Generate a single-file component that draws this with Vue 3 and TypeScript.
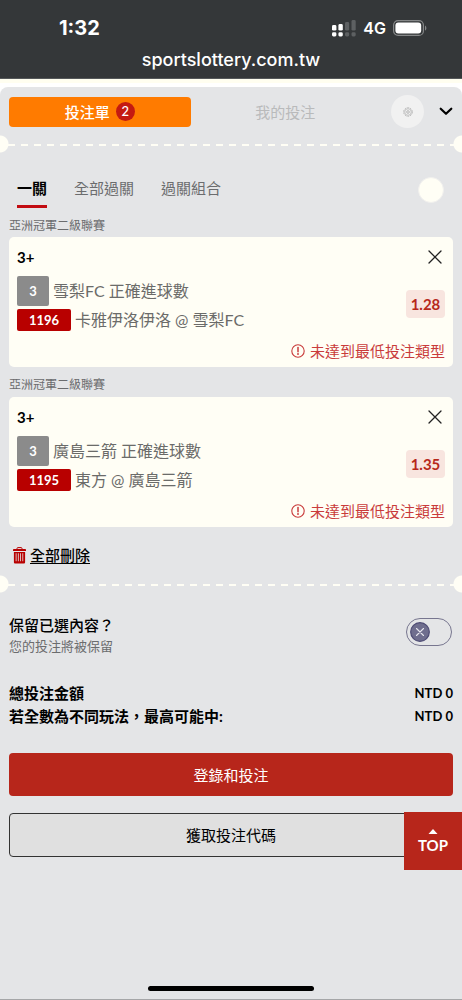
<script setup lang="ts">
import { ref } from 'vue'

interface Bet {
  id: string
  league: string
  pick: string
  minimum: string
  market: string
  match: string
  odds: string
}

const bets = ref<Bet[]>([
  { id: '1196', league: '亞洲冠軍二級聯賽', pick: '3+', minimum: '3', market: '雪梨FC 正確進球數', match: '卡雅伊洛伊洛 @ 雪梨FC', odds: '1.28' },
  { id: '1195', league: '亞洲冠軍二級聯賽', pick: '3+', minimum: '3', market: '廣島三箭 正確進球數', match: '東方 @ 廣島三箭', odds: '1.35' },
])

const modes = ['一關', '全部過關', '過關組合']
const activeMode = ref('一關')
const keepSelection = ref(false)

function removeBet(id: string): void {
  bets.value = bets.value.filter((bet) => bet.id !== id)
}
</script>

<template>
  <div class="screen">
    <header class="phone-bar">
      <div class="status">
        <span class="clock">1:32</span>
        <div class="indicators">
          <svg class="signal" width="24" height="17" viewBox="0 0 24 17" aria-hidden="true">
            <g fill="#fff">
              <rect x="0" y="5" width="4.4" height="5.600" rx="1.4" />
              <rect x="0" y="12.3" width="4.4" height="4.2" rx="1.4" />
              <rect x="6.4" y="4" width="4.4" height="6.600" rx="1.4" />
              <rect x="6.4" y="12.3" width="4.4" height="4.2" rx="1.4" />
            </g>
            <g fill="#5d6062">
              <rect x="13" y="2" width="4.2" height="8.600" rx="1.4" />
              <rect x="13" y="12.3" width="4.2" height="4.2" rx="1.4" />
              <rect x="19.5" y="0" width="4.2" height="10.600" rx="1.4" />
              <rect x="19.5" y="12.3" width="4.2" height="4.2" rx="1.4" />
            </g>
          </svg>
          <span class="network">4G</span>
          <svg class="battery" width="34" height="16" viewBox="0 0 34 16" aria-hidden="true">
            <rect x=".6" y=".6" width="29.8" height="14.8" rx="4.5" fill="none" stroke="#858788" stroke-width="1.2" />
            <rect x="2.4" y="2.4" width="25.8" height="11.2" rx="3" fill="#fff" />
            <path d="M32 5.4c1.8.7 1.8 4.5 0 5.2z" fill="#858788" />
          </svg>
        </div>
      </div>
      <div class="address">sportslottery.com.tw</div>
    </header>

    <main class="slip">
      <div class="top-row">
        <nav class="top-tabs">
          <button type="button" class="tab tab-on">投注單<span class="count">{{ bets.length }}</span></button>
          <button type="button" class="tab">我的投注</button>
        </nav>
        <button type="button" class="gear" aria-label="設定">
          <svg width="10" height="10" viewBox="0 0 10 10" fill="none" stroke="#b6b6b6">
            <circle cx="5" cy="5" r="4.3" stroke-width="1" stroke-dasharray="1.8 .9" />
            <circle cx="5" cy="5" r="3.3" stroke-width=".8" />
            <circle cx="5" cy="5" r="1.3" stroke-width="1" />
          </svg>
        </button>
        <button type="button" class="collapse" aria-label="收合">
          <svg width="14" height="9" viewBox="0 0 14 9" fill="none" stroke="#000" stroke-width="2.2" stroke-linecap="round" stroke-linejoin="round">
            <path d="M1.7 1.7 7 6.8l5.3-5.1" />
          </svg>
        </button>
      </div>

      <div class="tear"></div>

      <div class="modes">
        <button
          v-for="mode in modes"
          :key="mode"
          type="button"
          class="mode"
          :class="{ chosen: mode === activeMode }"
          @click="activeMode = mode"
        >{{ mode }}</button>
        <span class="dot"></span>
      </div>

      <section v-for="bet in bets" :key="bet.id" class="bet">
        <h2 class="league">{{ bet.league }}</h2>
        <article class="card">
          <div class="card-head">
            <span>{{ bet.pick }}</span>
            <button type="button" class="close" aria-label="移除" @click="removeBet(bet.id)">
              <svg width="14" height="14" viewBox="0 0 14 14" stroke="#222" stroke-width="1.3" stroke-linecap="round">
                <path d="M1 1l12 12M13 1 1 13" />
              </svg>
            </button>
          </div>
          <div class="card-body">
            <div class="lines">
              <div class="line"><span class="tag tag-min">{{ bet.minimum }}</span>{{ bet.market }}</div>
              <div class="line"><span class="tag tag-id">{{ bet.id }}</span>{{ bet.match }}</div>
            </div>
            <span class="odds">{{ bet.odds }}</span>
          </div>
          <p class="warning">
            <svg width="14" height="14" viewBox="0 0 14 14" aria-hidden="true">
              <circle cx="7" cy="7" r="6.2" fill="none" stroke="#c93b3b" stroke-width="1.1" />
              <path d="M7 3.5v4.2" stroke="#c93b3b" stroke-width="1.5" stroke-linecap="round" />
              <circle cx="7" cy="10" r=".95" fill="#c93b3b" />
            </svg>
            未達到最低投注類型
          </p>
        </article>
      </section>

      <button type="button" class="clear" @click="bets = []">
        <svg width="13" height="17" viewBox="0 0 13 17" aria-hidden="true">
          <path d="M4 2.2V1.5C4 .9 4.4.6 5 .6h3c.6 0 1 .3 1 .9v.7" fill="none" stroke="#b80000" stroke-width="1" />
          <path d="M.7 2h11.6c.4 0 .7.3.7.7V4H0V2.7C0 2.3.3 2 .7 2z" fill="#b80000" />
          <path fill-rule="evenodd" d="M.9 5h11.2v10.2c0 .8-.6 1.4-1.4 1.4H2.3c-.8 0-1.4-.6-1.4-1.4zM2.7 6.3v8h.8v-8zm2.200 0v8h.8v-8zm2.300 0v8h.8v-8zm2.200 0v8h.8v-8z" fill="#b80000" />
        </svg>
        <span>全部刪除</span>
      </button>

      <div class="tear"></div>

      <div class="keep">
        <label for="keep" class="keep-text">
          <strong>保留已選內容？</strong>
          <small>您的投注將被保留</small>
        </label>
        <span class="switch">
          <input id="keep" v-model="keepSelection" type="checkbox" />
          <svg class="knob" :class="{ on: keepSelection }" width="20" height="20" viewBox="0 0 20 20" aria-hidden="true">
            <circle cx="10" cy="10" r="9.3" fill="#6f6e8e" stroke="#4d4b74" stroke-width="1.2" />
            <path d="M6.5 6.5l7 7M13.5 6.5l-7 7" stroke="#e6e6ee" stroke-width="1.1" stroke-linecap="round" />
          </svg>
        </span>
      </div>

      <dl class="totals">
        <div><dt>總投注金額</dt><dd>NTD 0</dd></div>
        <div><dt>若全數為不同玩法，最高可能中:</dt><dd>NTD 0</dd></div>
      </dl>

      <div class="actions">
        <button type="button" class="action primary">登錄和投注</button>
        <div class="code-row">
          <button type="button" class="action outline">獲取投注代碼</button>
          <button type="button" class="to-top">
            <svg width="10" height="5" viewBox="0 0 10 5" aria-hidden="true"><path d="M5 0l4.5 5H.5z" fill="#fff" /></svg>
            TOP
          </button>
        </div>
      </div>

      <div class="home-indicator"></div>
    </main>
  </div>
</template>

<style>
body {
  margin: 0;
}
</style>

<style scoped>
* {
  box-sizing: border-box;
}
.screen {
  min-height: 100vh;
  display: flex;
  flex-direction: column;
  background: linear-gradient(#fffef0 83px, #fff 83px);
  color: #000;
  font-family: Lato, "Noto Sans CJK TC", sans-serif;
  font-size: 15px;
  line-height: 22px;
}
button {
  margin: 0;
  padding: 0;
  border: 0;
  background: none;
  color: inherit;
  font: inherit;
  cursor: pointer;
}
svg {
  display: block;
  flex: none;
}
.phone-bar {
  height: 79px;
  padding-top: 15px;
  background: #343739;
  border-bottom: 1px solid #55585a;
  color: #fff;
  font-family: Inter, sans-serif;
  font-weight: 600;
}
.status {
  display: flex;
  justify-content: space-between;
  align-items: center;
  height: 26px;
  padding: 0 35px 0 59px;
}
.clock {
  font-size: 20px;
  font-weight: 700;
}
.indicators {
  display: flex;
  align-items: center;
  gap: 7px;
}
.network {
  font-size: 16px;
}
.address {
  height: 38px;
  line-height: 38px;
  text-align: center;
  font-size: 18px;
  font-weight: 500;
}
.slip {
  flex: 1;
  display: flex;
  flex-direction: column;
  margin-top: 8px;
  border-radius: 8px 8px 0 0;
  border-bottom: 1px solid #a5a6a8;
  background: #e4e5e7;
}
.top-row {
  display: flex;
  align-items: center;
  gap: 15px;
  padding: 8px 9px 7px;
}
.top-tabs {
  flex: 1;
  display: grid;
  grid-template-columns: 1fr 1fr;
  gap: 4px;
}
.tab {
  height: 30px;
  display: flex;
  align-items: center;
  justify-content: center;
  gap: 6px;
  border-radius: 4px;
  color: #b9babb;
}
.tab-on {
  background: #ff7b00;
  color: #fff;
  font-weight: 500;
}
.count {
  width: 19px;
  height: 19px;
  border-radius: 50%;
  background: #c41a11;
  font-size: 13px;
  line-height: 19px;
}
.gear {
  width: 33px;
  height: 33px;
  display: grid;
  place-items: center;
  border-radius: 50%;
  background: #f1f1f1;
}
.tear {
  height: 18px;
  background:
    radial-gradient(circle at 0 9px, #fffef5 8px, transparent 9px),
    radial-gradient(circle at 100% 9px, #fffef5 8px, transparent 9px),
    repeating-linear-gradient(90deg, #fffef5 0 7px, transparent 7px 13px) 8px 9px / 100% 2px no-repeat;
}
.modes {
  display: flex;
  align-items: center;
  gap: 27px;
  height: 62px;
  padding: 11px 18px 0 17px;
  color: #6b6c6e;
}
.mode {
  height: 36px;
  border-bottom: 3px solid transparent;
}
.mode.chosen {
  border-color: #c20c12;
  color: #000;
  font-weight: 700;
}
.dot {
  width: 26px;
  height: 26px;
  margin-left: auto;
  border-radius: 50%;
  background: #fffef5;
  border: 1px solid #f1f0ee;
}
.bet {
  padding: 0 9px;
}
.league {
  margin: 0;
  padding-top: 7px;
  height: 30px;
  color: #6b6c6e;
  font-size: 12px;
  font-weight: 400;
  line-height: 22px;
}
.modes + .bet .league {
  height: 22px;
  padding-top: 0;
}
.card {
  height: 130px;
  padding: 9px 8px 5px;
  border-radius: 5px;
  background: #fffef5;
}
.card-head {
  display: flex;
  align-items: center;
  justify-content: space-between;
  height: 22px;
  font-weight: 700;
}
.close {
  width: 20px;
  height: 22px;
  display: grid;
  place-items: center;
}
.card-body {
  display: flex;
  align-items: center;
  justify-content: space-between;
  padding-top: 8px;
}
.lines {
  display: grid;
  gap: 3px;
}
.line {
  display: flex;
  align-items: center;
  gap: 4px;
  color: #6b6b69;
  font-size: 16px;
}
.tag {
  border-radius: 2px;
  color: #fff;
  font-size: 13px;
  font-weight: 700;
  text-align: center;
}
.tag-min {
  width: 32px;
  line-height: 30px;
  background: #8b8b8b;
}
.tag-id {
  width: 54px;
  line-height: 22px;
  background: #b80000;
}
.odds {
  width: 39px;
  border-radius: 4px;
  background: #f8e5df;
  color: #b7291b;
  font-size: 15px;
  font-weight: 700;
  line-height: 28px;
  text-align: center;
}
.warning {
  display: flex;
  align-items: center;
  justify-content: flex-end;
  gap: 5px;
  margin: 9px 0 0;
  color: #c93b3b;
}
.clear {
  display: flex;
  align-items: center;
  align-self: flex-start;
  gap: 4px;
  margin: 17px 0 9px 13px;
  font-weight: 500;
}
.clear span {
  text-decoration: underline;
  text-underline-offset: 2px;
}
.keep {
  display: flex;
  align-items: flex-start;
  justify-content: space-between;
  padding: 21px 10px 0 9px;
}
.keep-text {
  display: grid;
}
.keep-text strong {
  font-weight: 500;
}
.keep-text small {
  color: #6b6c6e;
  font-size: 13px;
  line-height: 20px;
}
.switch {
  position: relative;
  width: 46px;
  height: 28px;
  margin-top: 4px;
}
.switch input {
  display: block;
  appearance: none;
  width: 100%;
  height: 100%;
  margin: 0;
  border: 1px solid #77768f;
  border-radius: 14px;
}
.knob {
  position: absolute;
  top: 4px;
  left: 4px;
  pointer-events: none;
}
.knob.on {
  left: 22px;
}
.totals {
  margin: 26px 9px 0;
  font-weight: 700;
  line-height: 23px;
}
.totals div {
  display: flex;
  justify-content: space-between;
}
.totals dd {
  margin: 0;
  font-size: 13px;
}
.actions {
  display: grid;
  gap: 17px;
  padding: 25px 9px 0;
}
.action {
  width: 100%;
  height: 43px;
  border-radius: 4px;
}
.primary {
  background: #b7261b;
  color: #fff;
}
.code-row {
  position: relative;
}
.outline {
  display: block;
  height: 44px;
  border: 1px solid #333;
  background: #e0e0e0;
}
.to-top {
  position: absolute;
  top: -1px;
  right: -9px;
  width: 58px;
  height: 58px;
  padding-top: 3px;
  display: flex;
  flex-direction: column;
  align-items: center;
  justify-content: center;
  background: #b7261b;
  color: #fff;
  font-weight: 700;
}
.home-indicator {
  width: 36%;
  height: 5px;
  margin: auto auto 8px;
  border-radius: 3px;
  background: #000;
}
</style>
